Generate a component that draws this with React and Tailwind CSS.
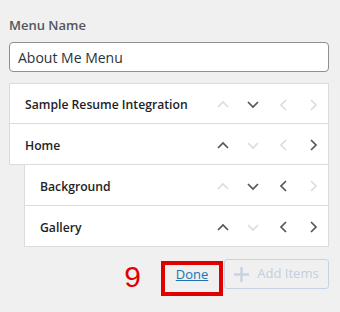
import React from 'react';

const ON = '#50575e';
const OFF = '#dcdcde';

const Chevron = ({ dir, active }) => {
  const pts = {
    up: '1,7 6,2 11,7',
    down: '1,2 6,7 11,2',
    left: '7,1 2,6 7,11',
    right: '2,1 7,6 2,11',
  }[dir];
  const vertical = dir === 'up' || dir === 'down';
  return (
    <span className="w-[30px] h-[30px] flex items-center justify-center">
      <svg
        width={vertical ? 12 : 9}
        height={vertical ? 9 : 12}
        viewBox={vertical ? '0 0 12 9' : '0 0 9 12'}
        fill="none"
        stroke={active ? ON : OFF}
        strokeWidth="1.7"
      >
        <polyline points={pts} />
      </svg>
    </span>
  );
};

const items = [
  { title: 'Sample Resume Integration', depth: 0, h: 'h-[41px]', moves: [false, true, false, false] },
  { title: 'Home', depth: 0, h: 'h-[42px]', moves: [true, false, false, true] },
  { title: 'Background', depth: 1, h: 'h-[42px]', moves: [false, true, true, false] },
  { title: 'Gallery', depth: 1, h: 'h-[42px]', moves: [true, false, true, true] },
];

export default function App() {
  return (
    <div className="w-[340px] h-[312px] bg-[#f0f0f0] overflow-hidden" style={{ fontFamily: '"Open Sans", "Noto Sans", sans-serif' }}>
      <div className="ml-[9px] w-[320px] pt-[15px]">
        <div className="h-[20px] leading-[20px] text-[13px] font-semibold text-[#50575e]">Menu Name</div>

        <div className="mt-[7px] h-[30px] bg-white border border-[#8c8f94] rounded-[4px] px-[8px] flex items-center text-[14px] text-[#2c3338]">
          About Me Menu
        </div>

        {/* menu items */}
        <div className="mt-[11px]">
          {items.map((it, i) => (
            <div
              key={it.title}
              className={`${it.h} pt-[2px] bg-white border border-[#dcdcde] flex items-center justify-between ${i > 0 ? '-mt-px' : ''} ${it.depth ? 'ml-[15px]' : ''}`}
            >
              <span className="pl-[15px] pt-[2px] text-[12.2px] font-semibold text-[#1d2327]">{it.title}</span>
              <div className="flex items-center">
                <Chevron dir="up" active={it.moves[0]} />
                <Chevron dir="down" active={it.moves[1]} />
                <Chevron dir="left" active={it.moves[2]} />
                <Chevron dir="right" active={it.moves[3]} />
              </div>
            </div>
          ))}
        </div>

        {/* footer */}
        <div className="mt-[12px] flex items-start justify-end">
          <span className="mt-[1px] mr-[20px] text-[30px] leading-[34px] text-[#e00000]" style={{ fontFamily: '"Liberation Sans", sans-serif' }}>9</span>
          <div className="mt-[2px] w-[62px] h-[35px] border-[4px] border-[#e00000] flex justify-center">
            <a href="#" className="text-[13px] leading-[19px] text-[#2271b1] underline">Done</a>
          </div>
          <button className="ml-px w-[105px] h-[30px] border border-[#c5d4e3] rounded-[3px] bg-[#f0f0f0] flex items-center justify-center gap-[8px] text-[13px] text-[#c3cfdc]">
            <svg width="15" height="15" viewBox="0 0 15 15" fill="none" stroke="#c5d3e2" strokeWidth="2.5">
              <path d="M7.5 0v15M0 7.5h15" />
            </svg>
            Add Items
          </button>
        </div>
      </div>
    </div>
  );
}
